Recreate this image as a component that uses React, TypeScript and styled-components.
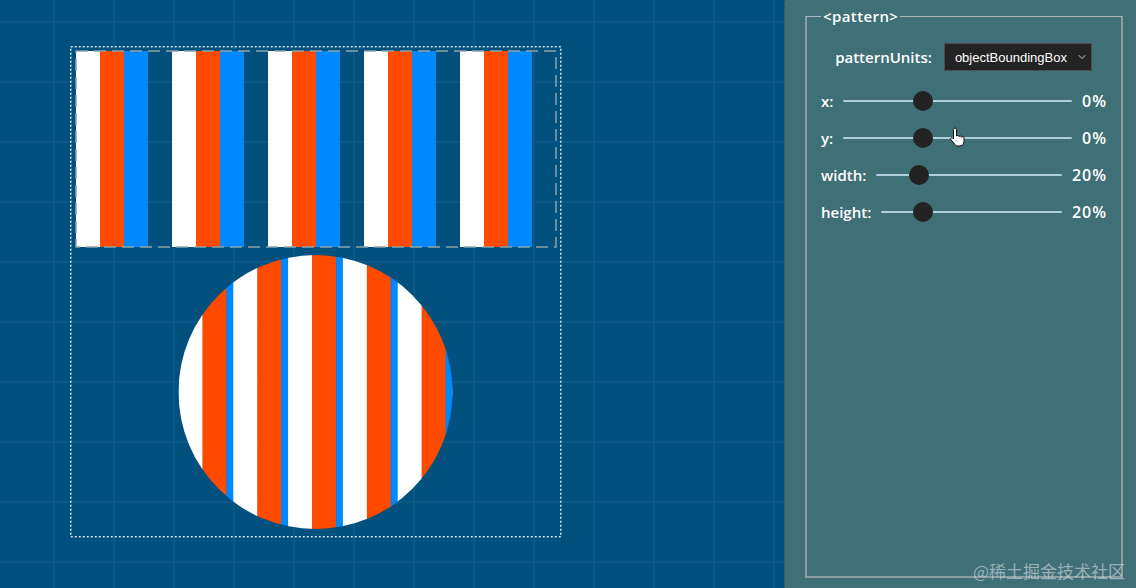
import React, { useState } from "react";
import styled, { createGlobalStyle } from "styled-components";
import { ChevronDown } from "lucide-react";

const GlobalStyle = createGlobalStyle`
  html, body {
    margin: 0;
    padding: 0;
    background: #02507e;
  }
  body {
    font-family: "Open Sans", "Liberation Sans", sans-serif;
  }
`;

const Page = styled.div`
  position: relative;
  display: grid;
  grid-template-columns: 784px 1fr;
  width: 1136px;
  height: 588px;
  overflow: hidden;
`;

const Canvas = styled.main`
  padding: 46px 0 0 70px;
  background-color: #02507e;
  background-image: linear-gradient(to right, #0b5886 2px, transparent 2px),
    linear-gradient(to bottom, #0b5886 2px, transparent 2px);
  background-size: 60px 60px;
  background-position: 53px 21px;
`;

const DemoSvg = styled.svg`
  display: block;
  overflow: visible;
`;

const Panel = styled.aside`
  display: flex;
  padding: 6px 13px 10px 20px;
  background: #3f6f77;
  border-left: 1px dotted #23505c;
`;

const Group = styled.fieldset`
  flex: 1;
  min-width: 0;
  margin: 0;
  padding: 17px 15px 0 14px;
  border: 2px solid #8c9fa2;
  border-top: 1px solid #a9b8ba;
`;

const Legend = styled.legend`
  padding: 0 2px;
  color: #fff;
  font: 600 15px/20px "Open Sans", "Liberation Sans", sans-serif;
  letter-spacing: 0.4px;
`;

const UnitsRow = styled.div`
  display: flex;
  justify-content: center;
  align-items: center;
  gap: 12px;
  height: 28px;
  margin-bottom: 11px;
`;

const Label = styled.label`
  color: #fff;
  font: 600 15px/20px "Open Sans", "Liberation Sans", sans-serif;
  white-space: nowrap;
`;

const SelectWrap = styled.div`
  position: relative;
  display: inline-flex;
`;

const Select = styled.select`
  appearance: none;
  -webkit-appearance: none;
  width: 148px;
  height: 28px;
  margin: 0;
  padding: 0 22px 0 10px;
  background: #232323;
  color: #fff;
  border: 1px solid #4d4d4d;
  border-radius: 0;
  font: 13px "Liberation Sans", Arial, sans-serif;
  outline: none;
`;

const Chevron = styled(ChevronDown)`
  position: absolute;
  right: 4px;
  top: 8px;
  color: #fff;
  pointer-events: none;
`;

const SliderRow = styled.div`
  display: grid;
  grid-template-columns: auto 1fr auto;
  align-items: center;
  column-gap: 10px;
  height: 37px;
`;

const Value = styled.span`
  color: #fff;
  font: 600 16px/20px "Open Sans", "Liberation Sans", sans-serif;
  letter-spacing: 1px;
  margin-right: -1px;
  text-align: right;
`;

const Range = styled.input.attrs({ type: "range" })`
  -webkit-appearance: none;
  appearance: none;
  width: 100%;
  height: 20px;
  margin: 0;
  background: transparent;

  &::-webkit-slider-runnable-track {
    height: 2px;
    background: #aecfdc;
    border-radius: 1px;
  }
  &::-webkit-slider-thumb {
    -webkit-appearance: none;
    width: 20px;
    height: 20px;
    margin-top: -9px;
    border: none;
    border-radius: 50%;
    background: #232323;
  }
`;

const Watermark = styled.div`
  position: absolute;
  right: 11px;
  bottom: 6px;
  color: rgba(214, 222, 226, 0.6);
  font: 17px/22px "Noto Sans CJK SC", "Noto Sans", sans-serif;
  pointer-events: none;
`;

const Pointer = styled.svg`
  position: absolute;
  left: 949px;
  top: 127px;
  pointer-events: none;
`;

const WHITE = "#ffffff";
const ORANGE = "#ff4a00";
const BLUE = "#0088ff";

const Stripes = ({ h }: { h: number }) => (
  <>
    <rect x={0} y={0} width={24} height={h} fill={WHITE} />
    <rect x={24} y={0} width={24} height={h} fill={ORANGE} />
    <rect x={48} y={0} width={24} height={h} fill={BLUE} />
  </>
);

const Demo = ({ p }: { p: Attrs }) => (
  <DemoSvg width={492} height={492} viewBox="0 0 492 492">
    <defs>
      <pattern
        id="tileTop"
        patternUnits="objectBoundingBox"
        x={p.x / 100}
        y={0}
        width={p.width / 100}
        height={1}
      >
        <Stripes h={196} />
      </pattern>
      <pattern
        id="tileCircle"
        patternUnits="objectBoundingBox"
        x={p.x / 100}
        y={p.y / 100}
        width={p.width / 100}
        height={p.height / 100}
      >
        <Stripes h={300} />
      </pattern>
    </defs>
    <rect
      x={0.75}
      y={0.75}
      width={490}
      height={490}
      fill="none"
      stroke="#d3e2ea"
      strokeWidth={1.5}
      strokeDasharray="2 2"
    />
    <rect
      x={6}
      y={5}
      width={480}
      height={196}
      fill="url(#tileTop)"
      stroke="#8ea3ab"
      strokeWidth={1.5}
      strokeDasharray="12 6"
    />
    <circle cx={245.5} cy={346} r={137} fill="url(#tileCircle)" />
  </DemoSvg>
);

interface Attrs {
  x: number;
  y: number;
  width: number;
  height: number;
}

const sliders: { key: keyof Attrs; min: number; max: number }[] = [
  { key: "x", min: -50, max: 100 },
  { key: "y", min: -50, max: 100 },
  { key: "width", min: 0, max: 100 },
  { key: "height", min: 0, max: 100 },
];

export default function App() {
  const [units, setUnits] = useState("objectBoundingBox");
  const [attrs, setAttrs] = useState<Attrs>({ x: 0, y: 0, width: 20, height: 20 });

  return (
    <>
      <GlobalStyle />
      <Page>
        <Canvas>
          <Demo p={attrs} />
        </Canvas>
        <Panel>
          <Group>
            <Legend>&lt;pattern&gt;</Legend>
            <UnitsRow>
              <Label htmlFor="units">patternUnits:</Label>
              <SelectWrap>
                <Select id="units" value={units} onChange={(e) => setUnits(e.target.value)}>
                  <option value="objectBoundingBox">objectBoundingBox</option>
                  <option value="userSpaceOnUse">userSpaceOnUse</option>
                </Select>
                <Chevron size={12} strokeWidth={1.5} />
              </SelectWrap>
            </UnitsRow>
            {sliders.map((s) => (
              <SliderRow key={s.key}>
                <Label htmlFor={s.key}>{s.key}:</Label>
                <Range
                  id={s.key}
                  min={s.min}
                  max={s.max}
                  value={attrs[s.key]}
                  onChange={(e) =>
                    setAttrs((prev) => ({ ...prev, [s.key]: Number(e.target.value) }))
                  }
                />
                <Value>{attrs[s.key]}%</Value>
              </SliderRow>
            ))}
          </Group>
        </Panel>
        <Pointer width={16} height={20} viewBox="0 0 16 20">
          <path
            d="M4.5 2.5A1.5 1.5 0 0 1 7.5 2.5V9A1.4 1.4 0 0 1 10 9.6A1.4 1.4 0 0 1 12.5 10.3A1.3 1.3 0 0 1 15 11V15Q15 19 11 19H8.5Q7 19 6 17.5L1.8 12.5A1.2 1.2 0 0 1 3.6 11L4.5 12Z"
            fill="#fff"
            stroke="#111"
            strokeWidth={1}
            strokeLinejoin="round"
          />
        </Pointer>
        <Watermark>@稀土掘金技术社区</Watermark>
      </Page>
    </>
  );
}
